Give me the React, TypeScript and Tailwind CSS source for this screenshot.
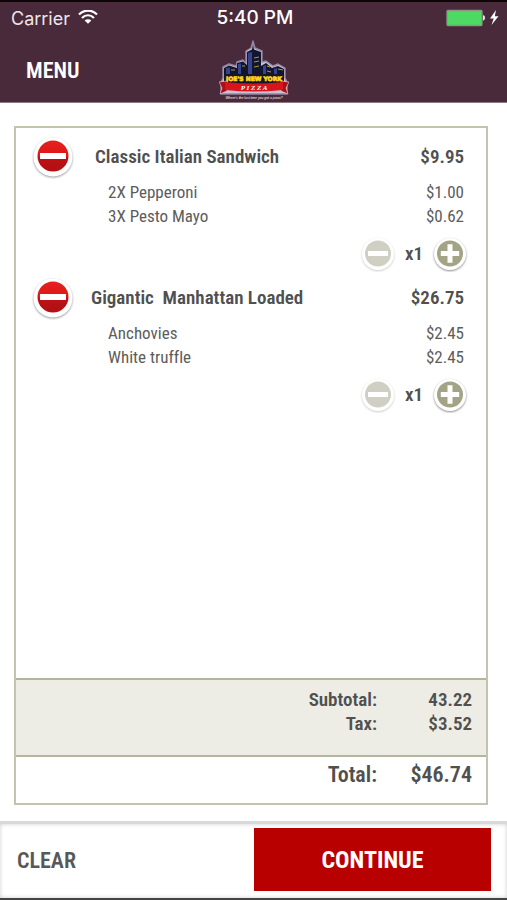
type Extra = { name: string; price: string };
type Item = { name: string; price: string; indent: string; extras: Extra[] };

const items: Item[] = [
  {
    name: "Classic Italian Sandwich",
    price: "$9.95",
    indent: "pl-5",
    extras: [
      { name: "2X Pepperoni", price: "$1.00" },
      { name: "3X Pesto Mayo", price: "$0.62" },
    ],
  },
  {
    name: "Gigantic  Manhattan Loaded",
    price: "$26.75",
    indent: "pl-4",
    extras: [
      { name: "Anchovies", price: "$2.45" },
      { name: "White truffle", price: "$2.45" },
    ],
  },
];

function Wifi() {
  return (
    <svg width="20" height="16" viewBox="0 0 20 16" fill="none" stroke="#fff" strokeWidth="2.2" aria-hidden="true">
      <path d="M1 4.600C6 -.8 14 -.8 19 4.600" />
      <path d="M4 8C7.600 4.300 12.400 4.300 16 8" />
      <path d="M10 13.800 6.600 10.400C8.500 8.700 11.500 8.700 13.400 10.400Z" fill="#fff" stroke="none" />
    </svg>
  );
}

function Battery() {
  return (
    <svg width="54" height="18" viewBox="0 0 54 18" aria-hidden="true">
      <rect x="2" y="1.500" width="35" height="15" rx="1" fill="#4cd964" stroke="#8b9580" strokeWidth="1.3" />
      <path d="M38 6.100c2.800.6 2.800 5 0 5.600Z" fill="#e8e0e4" />
      <path d="M51 1 45 9.500H48.700L46.500 16 53.500 7.300H49.800Z" fill="#fff" />
    </svg>
  );
}

function Logo() {
  return (
    <svg width="70" height="62" viewBox="0 0 70 62" role="img" aria-label="Pizza logo">
      <path
        d="M4 38V27L10 24 17 26 18 22 24 20 27 23V11L32 8 34 1 36 8 43 11V22L47 21 54 26 59 24 66 28V38L68 42V54H2V42Z"
        fill="#d9d3e4"
        stroke="#9c8fae"
        strokeWidth="1.4"
        strokeLinejoin="round"
        opacity=".9"
      />
      <path
        d="M5 40V28L10 25.500 18 28V23L24 21.500 28 25V12L33 9.500 34 4 35 9.500 42 12V26L47 23 53 28 59 26 65 29V40Z"
        fill="#11152f"
      />
      <path d="M29 13 33 12V36H29ZM19 24 22 23.500V36H19ZM7 28 11 27.500V36H7ZM44 26 47 25V36H44ZM55 29 58 28V36H55Z" fill="#34458c" />
      <path d="M35 18 40 17M35 22 40 21M35 27 40 26M48 26 51 27M48 31 52 32M59 29 64 30M12 30H16M23 26H26" stroke="#a99a3c" strokeWidth="1" />
      <path d="M5 34H65V44H5Z" fill="#17152a" />
      <text x="35" y="41" textAnchor="middle" fontFamily="DejaVu Sans, sans-serif" fontWeight="700" fontSize="6" fill="#ffd51d" stroke="#ffd51d" strokeWidth=".7">
        JOE'S NEW YORK
      </text>
      <path d="M0 42 8 41V51L1 54 3 48ZM70 42 62 41V51L69 54 67 48Z" fill="#a90f17" stroke="#e6d5dd" strokeWidth=".6" />
      <path d="M6 42Q35 45 64 42V50Q35 53 6 50Z" fill="#d8141d" />
      <text x="35" y="50" textAnchor="middle" fontFamily="Liberation Serif, serif" fontWeight="700" fontStyle="italic" fontSize="7" fill="#fff">
        P I Z Z A
      </text>
      <text x="35" y="59" textAnchor="middle" fontFamily="Liberation Sans, sans-serif" fontStyle="italic" fontSize="3.400" fill="#fff">
        Where's the last time you got a pizza?
      </text>
    </svg>
  );
}

function RemoveIcon() {
  return (
    <svg width="44" height="44" viewBox="0 0 44 44" className="block" aria-hidden="true">
      <defs>
        <linearGradient id="removeRed" x1="0" y1="0" x2="0" y2="1">
          <stop offset="0" stopColor="#e5201d" />
          <stop offset=".5" stopColor="#dc1818" />
          <stop offset=".55" stopColor="#bd1114" />
          <stop offset="1" stopColor="#b01015" />
        </linearGradient>
      </defs>
      <circle cx="22" cy="22" r="19.500" fill="#fff" className="drop-shadow-[0_1px_1px_rgba(0,0,0,0.4)]" />
      <circle cx="22" cy="21" r="15.500" fill="url(#removeRed)" />
      <rect x="9" y="18" width="26" height="6" fill="#fff" />
    </svg>
  );
}

function StepIcon({ plus }: { plus?: boolean }) {
  return (
    <svg width="36" height="36" viewBox="0 0 36 36" className="block" aria-hidden="true">
      <circle
        cx="18"
        cy="18"
        r="16"
        fill="#fff"
        className={plus ? "drop-shadow-[0_1px_1px_rgba(0,0,0,0.45)]" : "drop-shadow-[0_1px_1px_rgba(0,0,0,0.2)]"}
      />
      <circle cx="18" cy="17.500" r="13" fill={plus ? "#a3a386" : "#cfcfc3"} />
      <path d={plus ? "M8.800 17.500H27.200M18 8.300V26.700" : "M8 17.500H28"} stroke="#fff" strokeWidth="5" />
    </svg>
  );
}

function CartItem({ item }: { item: Item }) {
  return (
    <li className="pb-1">
      <div className="flex h-11 items-center">
        <button type="button" aria-label={`Remove ${item.name}`}>
          <RemoveIcon />
        </button>
        <h2 className={`grow text-[19px] font-semibold whitespace-pre ${item.indent}`}>{item.name}</h2>
        <span className="text-[19px] font-semibold">{item.price}</span>
      </div>
      <ul className="pt-px pl-[77px] text-[17px] leading-6 text-[#5c5c5c] [font-variant-ligatures:none]">
        {item.extras.map((extra) => (
          <li key={extra.name} className="flex justify-between">
            <span>{extra.name}</span>
            <span>{extra.price}</span>
          </li>
        ))}
      </ul>
      <div className="-mr-1 mt-2 flex items-center justify-end">
        <button type="button" aria-label="Decrease quantity">
          <StepIcon />
        </button>
        <span className="w-9 text-center text-[19px] font-semibold">x1</span>
        <button type="button" aria-label="Increase quantity">
          <StepIcon plus />
        </button>
      </div>
    </li>
  );
}

export default function App() {
  return (
    <div className="flex min-h-screen flex-col bg-white font-['Roboto_Condensed','Liberation_Sans_Narrow',Roboto,sans-serif] text-[#505050]">
      <header className="border-t-2 border-b border-t-[#0c0508] border-b-[#8d7a84] bg-[#482a3a] text-white">
        <div className="grid h-8 grid-cols-3 items-center pr-2 pl-[11px] font-[Inter,sans-serif] text-[18px]">
          <div className="flex items-center gap-2 text-[#eee6ea]">
            Carrier <Wifi />
          </div>
          <time className="text-center text-[19px] font-medium">5:40 PM</time>
          <div className="flex justify-end">
            <Battery />
          </div>
        </div>
        <div className="grid h-[68px] grid-cols-3 items-center pt-1">
          <button type="button" className="justify-self-start pl-[26px] text-[22px] font-semibold">
            MENU
          </button>
          <div className="self-end justify-self-center">
            <Logo />
          </div>
        </div>
      </header>

      <main className="flex grow flex-col pt-[23px] pr-[19px] pb-4 pl-[14px]">
        <section className="flex grow flex-col border-2 border-[#c3c3af]">
          <ul className="grow pt-[7px] pr-[22px] pl-[15px]">
            {items.map((item) => (
              <CartItem key={item.name} item={item} />
            ))}
          </ul>
          <dl className="grid h-[77px] grid-cols-[1fr_95px] content-start border-t-2 border-[#b5b59c] bg-[#edece5] pt-2 pr-[14px] text-right text-[19px] leading-6 font-semibold">
            <dt>Subtotal:</dt>
            <dd>43.22</dd>
            <dt>Tax:</dt>
            <dd>$3.52</dd>
          </dl>
          <dl className="grid h-12 grid-cols-[1fr_95px] content-start border-t-2 border-[#b5b59c] pt-1 pr-[14px] text-right text-[22px] leading-7 font-semibold">
            <dt>Total:</dt>
            <dd>$46.74</dd>
          </dl>
        </section>
      </main>

      <footer className="flex h-[79px] items-start justify-between border-t-3 border-b-2 border-t-[#d9d9d9] border-b-[#444] pt-1 pr-4 pl-[17px] leading-[63px] shadow-[inset_0_0_4px_rgba(0,0,0,0.2)]">
        <button type="button" className="pt-px text-[22px] font-semibold text-[#585858]">
          CLEAR
        </button>
        <button type="button" className="h-[63px] w-1/2 bg-[#b90000] pt-px text-[24px] font-bold text-white">
          CONTINUE
        </button>
      </footer>
    </div>
  );
}
